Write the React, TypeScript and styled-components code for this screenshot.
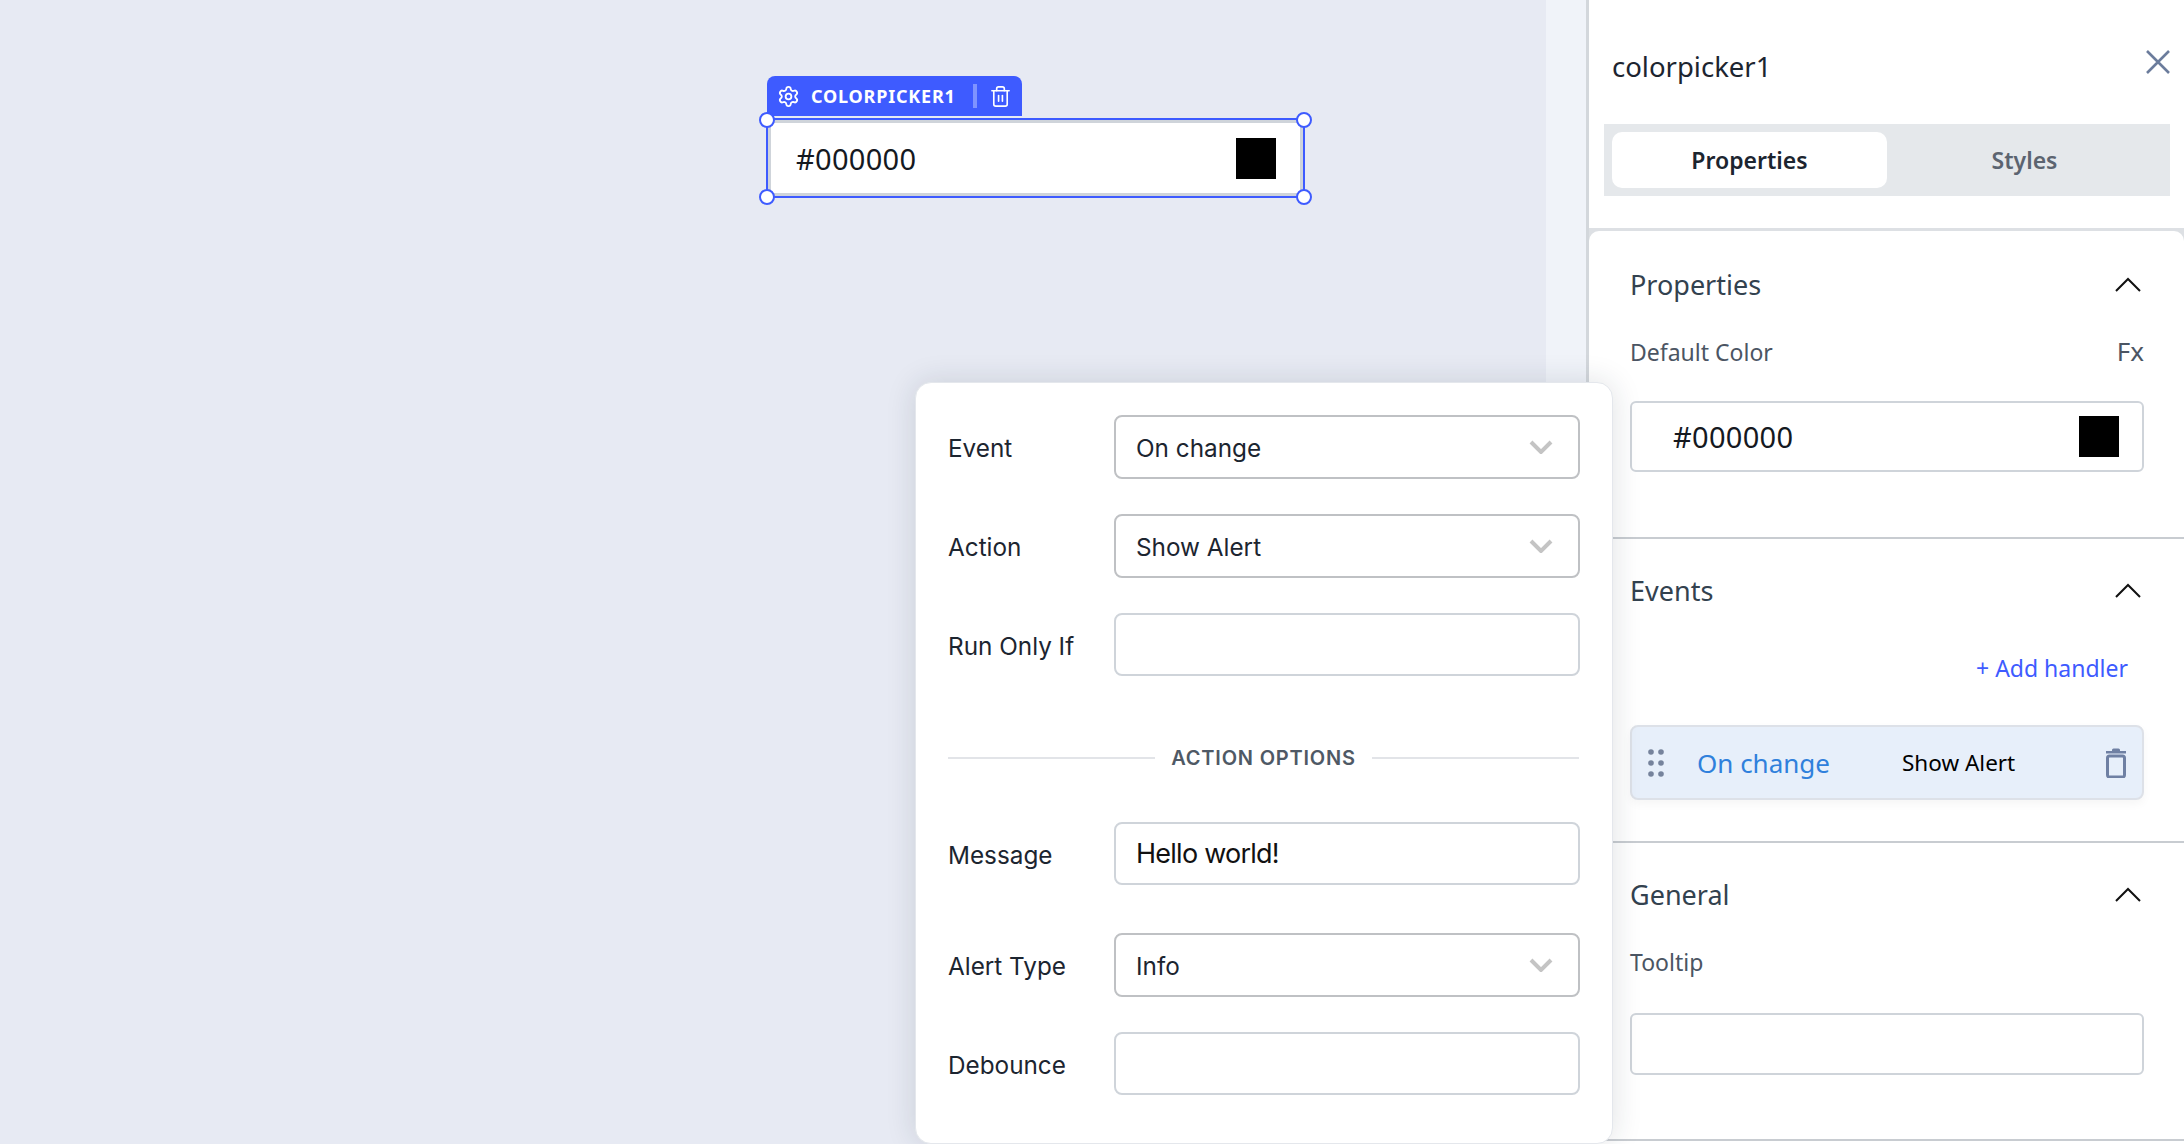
import styled, { createGlobalStyle } from "styled-components"
import { Settings, Trash2 } from "lucide-react"

const PANEL_FONT = `"Noto Sans", "Open Sans", sans-serif`
const POPOVER_FONT = `Inter, "Noto Sans", sans-serif`

const GlobalStyle = createGlobalStyle`
  html, body {
    margin: 0;
    padding: 0;
    height: 100%;
    overflow: hidden;
    background: #fff;
  }
  * { box-sizing: border-box; }
`

const Chevron = () => (
  <svg width="26" height="15" viewBox="0 0 26 15" fill="none">
    <path d="M1 14 L13 2 L25 14" stroke="#111" strokeWidth="2" />
  </svg>
)

const SelectArrow = () => (
  <svg width="24" height="14" viewBox="0 0 24 14" fill="none">
    <path d="M2 2 L12 12 L22 2" stroke="#c4c4c4" strokeWidth="4" />
  </svg>
)

const CloseIcon = () => (
  <svg width="24" height="24" viewBox="0 0 24 24" fill="none">
    <path d="M1 1 L23 23 M23 1 L1 23" stroke="#6b7c9c" strokeWidth="2.6" />
  </svg>
)

const DeleteIcon = () => (
  <svg width="20" height="30" viewBox="0 0 20 30" fill="none">
    <path d="M6 2 Q6 0.5 7.5 0.5 H12.5 Q14 0.5 14 2 V3 H20 V5.5 H0 V3 H6 Z" fill="#6f80a3" />
    <rect x="1.5" y="8" width="17" height="21" rx="2" stroke="#6f80a3" strokeWidth="3" />
  </svg>
)

const DragDots = () => (
  <svg width="16" height="28" viewBox="0 0 16 28" fill="#76839c">
    {[3, 14, 25].map(y => [3, 13].map(x => <circle key={`${x}-${y}`} cx={x} cy={y} r="2.8" />))}
  </svg>
)

interface IField {
  label: string
  value?: string
  select?: boolean
}

const PopoverField = ({ label, value, select }: IField) => (
  <FieldRow>
    <FieldLabel>{label}</FieldLabel>
    {select ? (
      <SelectBox>
        <SelectValue>{value}</SelectValue>
        <SelectArrow />
      </SelectBox>
    ) : (
      <FieldBox>{value}</FieldBox>
    )}
  </FieldRow>
)

const App = () => {
  return (
    <Page>
      <GlobalStyle />
      <Canvas>
        <Widget>
          <WidgetBar>
            <Settings size={23} strokeWidth={1.9} />
            <WidgetName>COLORPICKER1</WidgetName>
            <BarDivider />
            <Trash2 size={23} strokeWidth={1.7} />
          </WidgetBar>
          <WidgetFrame>
            <WidgetInput>
              <HexValue>#000000</HexValue>
              <Swatch />
            </WidgetInput>
            <Handle $top $left />
            <Handle $top />
            <Handle $left />
            <Handle />
          </WidgetFrame>
        </Widget>
      </Canvas>
      <Strip />

      <Panel>
        <PanelHeader>
          <PanelTitle>colorpicker1</PanelTitle>
          <CloseButton><CloseIcon /></CloseButton>
        </PanelHeader>
        <Tabs>
          <Tab $active>Properties</Tab>
          <Tab>Styles</Tab>
        </Tabs>
        <TabsRule />

        <SectionGroup>
          <Section $height={308}>
            <SectionHead>
              Properties
              <Chevron />
            </SectionHead>
            <LabelRow>
              <SideLabel>Default Color</SideLabel>
              <FxMark>Fx</FxMark>
            </LabelRow>
            <ColorInput>
              <HexValue>#000000</HexValue>
              <Swatch />
            </ColorInput>
          </Section>

          <Section $height={304}>
            <SectionHead>
              Events
              <Chevron />
            </SectionHead>
            <AddHandler>+ Add handler</AddHandler>
            <HandlerCard>
              <DragDots />
              <HandlerEvent>On change</HandlerEvent>
              <HandlerAction>Show Alert</HandlerAction>
              <DeleteIcon />
            </HandlerCard>
          </Section>

          <Section $height={298}>
            <SectionHead>
              General
              <Chevron />
            </SectionHead>
            <LabelRow>
              <SideLabel>Tooltip</SideLabel>
            </LabelRow>
            <PanelInput />
          </Section>
        </SectionGroup>
      </Panel>

      <Popover>
        <FieldStack>
          <PopoverField label="Event" value="On change" select />
          <PopoverField label="Action" value="Show Alert" select />
          <PopoverField label="Run Only If" />
        </FieldStack>
        <OptionsRule>ACTION OPTIONS</OptionsRule>
        <PopoverField label="Message" value="Hello world!" />
        <FieldStack $top={48}>
          <PopoverField label="Alert Type" value="Info" select />
          <PopoverField label="Debounce" />
        </FieldStack>
      </Popover>
    </Page>
  )
}

const Page = styled.div`
  position: relative;
  display: flex;
  width: 2184px;
  height: 1144px;
  overflow: hidden;
  font-family: ${PANEL_FONT};
`
const Canvas = styled.div`
  position: relative;
  width: 1546px;
  background: #e7eaf3;
`
const Strip = styled.div`
  width: 40px;
  background: #f0f3f9;
`
const Widget = styled.div`
  position: absolute;
  left: 766px;
  top: 76px;
  width: 539px;
`
const WidgetBar = styled.div`
  display: flex;
  align-items: center;
  width: 255px;
  height: 40px;
  margin-left: 1px;
  padding: 0 10px;
  color: #fff;
  background: #3e5bff;
  border-radius: 8px 8px 0 0;
`
const WidgetName = styled.span`
  margin-left: 11px;
  font-size: 18px;
  font-weight: 700;
  letter-spacing: 0.8px;
`
const BarDivider = styled.span`
  width: 4px;
  height: 24px;
  margin: 0 12px 0 auto;
  background: #7f93ff;
`
const WidgetFrame = styled.div`
  position: relative;
  height: 80px;
  margin-top: 2px;
  border: 2px solid #3e5bff;
`
const WidgetInput = styled.div`
  display: flex;
  align-items: center;
  justify-content: space-between;
  height: 100%;
  padding: 0 24px 0 25px;
  background: #fff;
  border: 3px solid #cfd4da;
`
const HexValue = styled.span`
  font-size: 29px;
  letter-spacing: 0.3px;
  color: #15191f;
`
const Swatch = styled.span`
  display: block;
  width: 40px;
  height: 41px;
  background: #000;
`
const Handle = styled.span<{ $top?: boolean; $left?: boolean }>`
  position: absolute;
  ${({ $top }) => ($top ? "top: -8px;" : "bottom: -9px;")}
  ${({ $left }) => ($left ? "left: -9px;" : "right: -9px;")}
  width: 16px;
  height: 16px;
  background: #fff;
  border: 2px solid #3e5bff;
  border-radius: 50%;
`
const Panel = styled.aside`
  flex: 1;
  min-width: 0;
  display: flex;
  flex-direction: column;
  background: #fff;
  border-left: 3px solid #d3d7dc;
`
const PanelHeader = styled.header`
  display: flex;
  align-items: center;
  justify-content: space-between;
  height: 124px;
  padding: 0 14px 0 23px;
`
const PanelTitle = styled.h1`
  margin: 0 0 -8px;
  font-size: 27.5px;
  font-weight: 400;
  color: #1c2530;
`
const CloseButton = styled.span`
  display: flex;
  margin-top: -1px;
`
const Tabs = styled.div`
  display: flex;
  height: 72px;
  margin: 0 14px 0 15px;
  padding: 8px;
  background: #e5e8eb;
`
const Tab = styled.div<{ $active?: boolean }>`
  flex: 1;
  display: flex;
  align-items: center;
  justify-content: center;
  font-size: 23px;
  font-weight: 600;
  color: ${({ $active }) => ($active ? "#1c2530" : "#5c6470")};
  background: ${({ $active }) => ($active ? "#fff" : "transparent")};
  border-radius: 10px;
`
const TabsRule = styled.div`
  height: 3px;
  margin-top: 32px;
  background: #dde0e4;
`
const SectionGroup = styled.div`
  background: #dde0e4;
`
const Section = styled.section<{ $height: number }>`
  display: flex;
  flex-direction: column;
  height: ${({ $height }) => $height}px;
  padding: 29px 40px 0 41px;
  background: #fff;
  border-bottom: 2px solid #c8ccd1;
  &:first-of-type {
    padding-top: 31px;
    border-top-left-radius: 10px;
    border-top-right-radius: 10px;
  }
  &:last-of-type {
    border-bottom-left-radius: 10px;
  }
`
const SectionHead = styled.div`
  display: flex;
  align-items: center;
  justify-content: space-between;
  height: 44px;
  padding-right: 3px;
  font-size: 27px;
  color: #33424f;
`
const LabelRow = styled.div`
  display: flex;
  align-items: center;
  justify-content: space-between;
  height: 34px;
  margin-top: 29px;
`
const SideLabel = styled.span`
  font-size: 23px;
  color: #4b5563;
`
const FxMark = styled.span`
  margin-top: -2px;
  font-size: 26px;
  color: #4b5563;
`
const PanelInput = styled.div`
  height: 62px;
  margin-top: 34px;
  background: #fff;
  border: 2px solid #cfd4da;
  border-radius: 6px;
`
const ColorInput = styled(PanelInput)`
  display: flex;
  align-items: center;
  justify-content: space-between;
  height: 71px;
  margin-top: 32px;
  padding: 0 23px 0 41px;
`
const AddHandler = styled.div`
  align-self: flex-end;
  margin: 40px 16px 0 0;
  font-size: 23px;
  color: #3e5bff;
`
const HandlerCard = styled.div`
  display: flex;
  align-items: center;
  height: 75px;
  margin-top: 41px;
  padding: 0 16px 0 16px;
  background: #e7effa;
  border: 2px solid #dde1e8;
  border-radius: 8px;
  box-shadow: 0 4px 10px rgba(0, 0, 0, 0.04);
`
const HandlerEvent = styled.span`
  width: 205px;
  margin-left: 33px;
  font-size: 26px;
  color: #2f80dc;
`
const HandlerAction = styled.span`
  flex: 1;
  font-size: 22.5px;
  color: #000;
`
const Popover = styled.div`
  position: absolute;
  left: 915px;
  top: 382px;
  width: 698px;
  height: 762px;
  padding: 32px 33px 0 32px;
  font-family: ${POPOVER_FONT};
  background: #fff;
  border: 1px solid #e4e7ec;
  border-radius: 16px;
  box-shadow: 0 0 30px rgba(30, 40, 60, 0.14);
`
const FieldStack = styled.div<{ $top?: number }>`
  display: flex;
  flex-direction: column;
  gap: 35px;
  margin-top: ${({ $top }) => $top ?? 0}px;
`
const FieldRow = styled.div`
  display: grid;
  grid-template-columns: 166px 466px;
  align-items: center;
`
const FieldLabel = styled.span`
  padding-top: 2px;
  font-size: 24.3px;
  color: #1c2530;
`
const FieldBox = styled.div`
  display: flex;
  align-items: center;
  height: 63px;
  padding: 0 20px;
  font-size: 27px;
  letter-spacing: -0.75px;
  color: #111;
  border: 2px solid #cfd4da;
  border-radius: 8px;
`
const SelectBox = styled(FieldBox)`
  justify-content: space-between;
  height: 64px;
  padding: 0 25px 0 20px;
  border-color: #bfc1c4;
`
const SelectValue = styled.span`
  padding-top: 2px;
  font-size: 24.3px;
  letter-spacing: 0;
  color: #1c2530;
`
const OptionsRule = styled.div`
  display: flex;
  align-items: center;
  gap: 16px;
  height: 24px;
  margin: 70px 0 52px;
  font-size: 20px;
  font-weight: 600;
  letter-spacing: 0.8px;
  color: #4f5965;
  &::before, &::after {
    content: "";
    flex: 1;
    height: 2px;
    background: #e2e4e8;
  }
`

export default App
